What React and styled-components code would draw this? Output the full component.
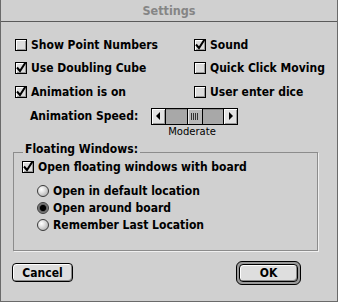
import React from 'react';
import styled, { createGlobalStyle } from 'styled-components';

const GlobalStyle = createGlobalStyle`
  html, body {
    margin: 0;
    padding: 0;
    background: #d0d0d0;
  }
  body {
    font-family: "DejaVu Sans Condensed", "DejaVu Sans", Verdana, sans-serif;
    font-stretch: condensed;
    -webkit-font-smoothing: none;
  }
`;

const Window = styled.div`
  width: 338px;
  height: 302px;
  box-sizing: border-box;
  background: #d0d0d0;
  border-left: 1px solid #6a6a6a;
  border-right: 1px solid #6a6a6a;
  border-bottom: 1px solid #6a6a6a;
  display: flex;
  flex-direction: column;
  color: #000;
`;

const TitleBar = styled.div`
  height: 21px;
  flex: none;
  border-bottom: 1px solid #5a5a5a;
  display: flex;
  align-items: center;
  justify-content: center;
  font-weight: bold;
  font-size: 12.5px;
  color: #858585;
`;

const Content = styled.div`
  padding: 11px 0 0 14px;
  display: flex;
  flex-direction: column;
`;

const OptionGrid = styled.div`
  display: grid;
  grid-template-columns: 179px 1fr;
  grid-auto-rows: 23.5px;
`;

const Option = styled.label`
  display: flex;
  align-items: center;
  gap: 4px;
  font-weight: bold;
  font-size: 12px;
  white-space: nowrap;
`;

const Box = styled.span`
  width: 12px;
  height: 12px;
  box-sizing: border-box;
  flex: none;
  border: 1px solid #000;
  background: #dcdcdc;
  box-shadow: inset 1px 1px 0 #fff, inset -1px -1px 0 #9a9a9a;
  display: flex;
  align-items: center;
  justify-content: center;
  overflow: visible;
`;

const Checkbox = ({ checked }) => (
  <Box>
    {checked && (
      <svg width="12" height="12" viewBox="0 0 12 12" style={{ overflow: 'visible' }}>
        <path d="M2 5.5 L5 9 L10.5 0.5" fill="none" stroke="#000" strokeWidth="2" />
      </svg>
    )}
  </Box>
);

const Dot = styled.span`
  width: 12px;
  height: 12px;
  box-sizing: border-box;
  flex: none;
  border-radius: 50%;
  border: 1px solid #3a3a3a;
  background: ${(p) =>
    p.$on
      ? 'radial-gradient(circle at 50% 50%, #000 0 2.8px, #555 3.2px, #888 5px)'
      : 'radial-gradient(circle at 35% 35%, #fff 0, #e6e6e6 30%, #a0a0a0 100%)'};
`;

const SpeedRow = styled.div`
  display: flex;
  align-items: flex-start;
  margin-top: 4px;
  padding-left: 15px;
`;

const SpeedLabel = styled.span`
  font-weight: bold;
  font-size: 12px;
  width: 121px;
  height: 17px;
  display: flex;
  align-items: center;
`;

const SliderCol = styled.div`
  display: flex;
  flex-direction: column;
  align-items: center;
`;

const Slider = styled.div`
  width: 87px;
  height: 17px;
  display: flex;
  box-sizing: border-box;
`;

const ArrowButton = styled.span`
  width: 15px;
  flex: none;
  box-sizing: border-box;
  border: 1px solid #000;
  background: #e2e2e2;
  box-shadow: inset 1px 1px 0 #fff, inset -1px -1px 0 #999;
  display: flex;
  align-items: center;
  justify-content: center;
`;

const Track = styled.span`
  flex: 1;
  border-top: 1px solid #000;
  border-bottom: 1px solid #000;
  background: #a8a8a8;
  box-shadow: inset 0 1px 0 #8a8a8a;
  display: flex;
  justify-content: center;
`;

const Thumb = styled.span`
  width: 16px;
  box-sizing: border-box;
  border-left: 1px solid #000;
  border-right: 1px solid #000;
  background: #b8b8b8;
  box-shadow: inset 1px 1px 0 #e8e8e8;
  display: flex;
  align-items: center;
  justify-content: center;
  gap: 1px;
`;

const Grip = styled.span`
  width: 1px;
  height: 7px;
  background: #333;
`;

const Caption = styled.span`
  font-family: "DejaVu Sans", Verdana, sans-serif;
  font-stretch: normal;
  font-size: 10px;
  line-height: 12px;
  margin-top: 1px;
  margin-left: -5px;
`;

const Group = styled.fieldset`
  margin: 4px 0 0 -2px;
  width: 305px;
  height: 109px;
  box-sizing: border-box;
  padding: 0;
  border: 1px solid #8c8c8c;
  box-shadow: 1px 1px 0 #f0f0f0;
  display: flex;
  flex-direction: column;
`;

const Legend = styled.legend`
  margin-left: 9px;
  padding: 0 2px 7px;
  font-weight: bold;
  font-size: 12px;
  line-height: 14px;
`;

const GroupBody = styled.div`
  padding: 0 0 0 8px;
  display: flex;
  flex-direction: column;
`;

const GroupOption = styled(Option)`
  height: 14px;
  margin-top: -3px;
`;

const RadioList = styled.div`
  display: flex;
  flex-direction: column;
  padding: 8.5px 0 0 15px;
`;

const RadioOption = styled(Option)`
  height: 17px;
`;

const ButtonRow = styled.div`
  display: flex;
  justify-content: space-between;
  align-items: center;
  padding: 10px 36px 0 11px;
`;

const Button = styled.button`
  width: ${(p) => p.$w}px;
  height: ${(p) => p.$h}px;
  box-sizing: border-box;
  border: 1px solid #000;
  border-radius: 4px;
  background: #dedede;
  box-shadow: inset 1px 1px 0 #fff, inset -1px -1px 0 #8a8a8a;
  font-family: inherit;
  font-stretch: condensed;
  font-weight: bold;
  font-size: 12px;
  color: #000;
  padding: 0;
`;

const DefaultRing = styled.span`
  display: flex;
  padding: 2px;
  border: 1px solid #000;
  border-radius: 6px;
  background: #9a9a9a;
`;

const Triangle = ({ dir }) => (
  <svg width="5" height="8" viewBox="0 0 5 8">
    <path d={dir === 'left' ? 'M4 0 L0 4 L4 8 Z' : 'M1 0 L5 4 L1 8 Z'} fill="#000" />
  </svg>
);

const options = [
  ['Show Point Numbers', false],
  ['Sound', true],
  ['Use Doubling Cube', true],
  ['Quick Click Moving', false],
  ['Animation is on', true],
  ['User enter dice', false],
];

const radios = [
  ['Open in default location', false],
  ['Open around board', true],
  ['Remember Last Location', false],
];

const App = () => (
  <>
    <GlobalStyle />
    <Window>
      <TitleBar>Settings</TitleBar>
      <Content>
        <OptionGrid>
          {options.map(([label, on]) => (
            <Option key={label}>
              <Checkbox checked={on} />
              {label}
            </Option>
          ))}
        </OptionGrid>

        <SpeedRow>
          <SpeedLabel>Animation Speed:</SpeedLabel>
          <SliderCol>
            <Slider>
              <ArrowButton><Triangle dir="left" /></ArrowButton>
              <Track>
                <Thumb>
                  <Grip /><Grip /><Grip /><Grip />
                </Thumb>
              </Track>
              <ArrowButton><Triangle dir="right" /></ArrowButton>
            </Slider>
            <Caption>Moderate</Caption>
          </SliderCol>
        </SpeedRow>

        <Group>
          <Legend>Floating Windows:</Legend>
          <GroupBody>
            <GroupOption>
              <Checkbox checked />
              Open floating windows with board
            </GroupOption>
            <RadioList>
              {radios.map(([label, on]) => (
                <RadioOption key={label}>
                  <Dot $on={on} />
                  {label}
                </RadioOption>
              ))}
            </RadioList>
          </GroupBody>
        </Group>
      </Content>

      <ButtonRow>
        <Button $w={61} $h={19}>Cancel</Button>
        <DefaultRing>
          <Button $w={59} $h={18}>OK</Button>
        </DefaultRing>
      </ButtonRow>
    </Window>
  </>
);

export default App;
